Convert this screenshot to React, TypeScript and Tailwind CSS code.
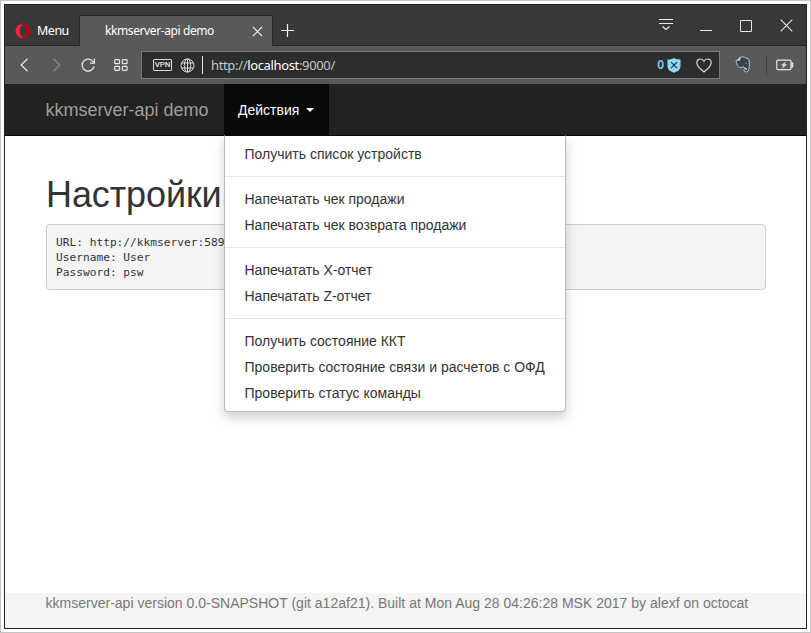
import React from "react";

const menuGroups: string[][] = [
  ["Получить список устройств"],
  ["Напечатать чек продажи", "Напечатать чек возврата продажи"],
  ["Напечатать X-отчет", "Напечатать Z-отчет"],
  ["Получить состояние ККТ", "Проверить состояние связи и расчетов с ОФД", "Проверить статус команды"],
];

function TabStrip() {
  return (
    <div className="flex h-[41px] shrink-0 items-end border-b border-[#232323] bg-[#383838] text-white">
      <div className="flex h-[28px] w-[74px] items-center pl-[10px]">
        <svg width="16" height="16" viewBox="0 0 16 16" className="shrink-0">
          <path fillRule="evenodd" d="M8 .5a7.5 7.5 0 1 0 0 15 7.5 7.5 0 0 0 0-15ZM8 2.2c2 0 3.100 2.400 3.100 5.800s-1.100 5.800-3.100 5.800S4.900 11.400 4.900 8 6 2.200 8 2.200Z" fill="#ff2030" />
          <path d="M8 .5a7.500 7.500 0 0 1 0 15c-1.300 0-2.400-.5-3.200-1.200 1.100.5 2.200.4 3.200-.5 2 0 3.100-2.400 3.100-5.800S10 2.200 8 2.200C7 1.400 5.900 1.200 4.800 1.700 5.700 1 6.800.5 8 .5Z" fill="#a80a1a" />
        </svg>
        <span className="ml-[6px] text-[12.5px] leading-4 tracking-[-0.5px]">Menu</span>
      </div>
      <div className="-mb-px flex h-[31px] w-[194px] items-center border-x border-t border-[#272727] bg-[#59595b] pl-[25px]">
        <span className="w-[147px] whitespace-nowrap text-[12px] leading-4 tracking-[-0.4px]">kkmserver-api demo</span>
        <svg width="11" height="11" viewBox="0 0 11 11" className="shrink-0" stroke="#eee" strokeWidth="1.1">
          <path d="M1 1l9 9M10 1l-9 9" />
        </svg>
      </div>
      <svg width="13" height="13" viewBox="0 0 13 13" className="mb-[8px] ml-[8px]" stroke="#eee" strokeWidth="1.200">
        <path d="M0 6.500h13M6.500 0v13" />
      </svg>
      <div className="mb-[12px] ml-auto flex items-center pr-[13px]">
        <svg width="16" height="15" viewBox="0 0 16 15" fill="none" stroke="#e8e8e8">
          <path d="M1 1.500h14M1 5.500h14" />
          <path d="M4.500 8.500L8 11.500l3.500-3" strokeWidth="1.300" />
        </svg>
        <svg width="12" height="15" viewBox="0 0 12 15" className="ml-[26px]" stroke="#e8e8e8">
          <path d="M0 12.500h12" />
        </svg>
        <svg width="12" height="12" viewBox="0 0 12 12" className="ml-[28px]" fill="none" stroke="#e8e8e8">
          <path d="M.5.5h11v11H.5z" />
        </svg>
        <svg width="13" height="13" viewBox="0 0 13 13" className="ml-[28px]" stroke="#e8e8e8" strokeWidth="1.100">
          <path d="M.7.7l11.600 11.600M12.300.7L.7 12.300" />
        </svg>
      </div>
    </div>
  );
}

function Toolbar() {
  return (
    <div className="flex h-[38px] shrink-0 items-center bg-[#59595b]">
      <svg width="9" height="14" viewBox="0 0 9 14" className="ml-[15px]" fill="none" stroke="#e4e4e4" strokeWidth="1.300">
        <path d="M7.500.8L1.200 7l6.300 6.200" />
      </svg>
      <svg width="9" height="14" viewBox="0 0 9 14" className="ml-[23px]" fill="none" stroke="#858587" strokeWidth="1.300">
        <path d="M1.500.8L7.800 7l-6.300 6.200" />
      </svg>
      <svg width="15" height="14" viewBox="0 0 15 14" className="ml-[20px]" fill="none" stroke="#e4e4e4" strokeWidth="1.300">
        <path d="M12.300 4A6 6 0 1 0 13 8.500M13.400.8v4.400H9" />
      </svg>
      <svg width="14" height="12" viewBox="0 0 14 12" className="ml-[17.500px]" fill="none" stroke="#e4e4e4" strokeWidth="1.200">
        <rect x=".7" y=".7" width="4.800" height="4" rx=".8" />
        <rect x="8.300" y=".7" width="4.800" height="4" rx=".8" />
        <rect x=".7" y="7.300" width="4.800" height="4" rx=".8" />
        <rect x="8.300" y="7.300" width="4.800" height="4" rx=".8" />
      </svg>
      <div className="ml-[13.500px] flex h-[28px] w-[579px] items-center border border-[#77797a] bg-[#2b2e2d] pl-[11px]">
        <span className="flex h-[12px] w-[19px] shrink-0 items-center justify-center rounded-[1px] border border-[#d5d5d5] font-['Roboto'] text-[8px] font-medium leading-none tracking-[-0.2px] text-[#e2e2e2]">VPN</span>
        <svg width="15" height="15" viewBox="0 0 15 15" className="ml-[8px] shrink-0" fill="none" stroke="#d5d8d8">
          <circle cx="7.500" cy="7.500" r="6.500" />
          <ellipse cx="7.500" cy="7.500" rx="3.200" ry="6.500" />
          <path d="M1.600 5h11.800M1.600 10h11.800M7.500 1v13" />
        </svg>
        <span className="ml-[7px] h-[18px] w-px bg-[#e8e8e8]" />
        <span className="ml-[8px] whitespace-nowrap text-[13px] leading-4 tracking-[-0.35px] text-[#c5c7c6]">
          http://<span className="text-white">localhost</span>:9000/
        </span>
        <span className="ml-auto text-[12px] font-semibold leading-4 text-[#7dcbff]">0</span>
        <svg width="14" height="15" viewBox="0 0 14 15" className="ml-[3px]">
          <path d="M.5 1.500Q4 1.500 7 .2q3 1.300 6.500 1.300v6.800q0 4.500-6.500 6.500Q.5 12.800.5 8.300Z" fill="#8ed7ff" />
          <path d="M4 4.200l6 6M10 4.200l-6 6" stroke="#263039" strokeWidth="1.200" />
        </svg>
        <svg width="16" height="15" viewBox="0 0 16 15" className="ml-[15px] mr-[7px]" fill="none" stroke="#d6d8d7" strokeWidth="1.200">
          <path d="M8 14C6.500 12.600.8 8.800.8 4.700.8 2.500 2.500 1 4.500 1 6 1 7.300 1.900 8 3.300 8.700 1.900 10 1 11.500 1c2 0 3.700 1.500 3.700 3.700C15.200 8.800 9.500 12.600 8 14Z" />
        </svg>
      </div>
      <svg width="16" height="17" viewBox="0 0 16 17" className="mb-[2px] ml-[15px]">
        <path d="M5.400 1h3.800l1.300 1 2.700.5q.7.300.8 1.300.6 4.300.2 8.200-.3 4-2.700 4-2.600 0-2.600-2.200 0-1.800 1.900-1.600-2 0-2.300-1.600-1.200 1.300-3.800.8Q1.700 10.200 1 5l.4-.8h3.500Z" fill="#34444a" stroke="#b9c0c2" />
        <path d="M1.200 4.500L5 .8v3.700ZM10.500 12.300H12v1.700h-1.500Z" fill="#b9c0c2" />
        <path d="M10.500 7.600q1-.8 1.500.3" fill="none" stroke="#9fa9ad" strokeWidth=".8" />
      </svg>
      <div className="ml-[15px] h-[19px] w-px bg-[#3f3f40]" />
      <svg width="18" height="12" viewBox="0 0 18 12" className="ml-[9px]" fill="none" stroke="#e2e2e2" strokeWidth="1.200">
        <rect x=".8" y="1.200" width="14.200" height="9.400" rx="1" />
        <path d="M15.400 3.800H17v4.400h-1.600Z" fill="#e2e2e2" strokeWidth=".6" />
        <path d="M10 2.300L4.800 6.500h2.500L6 9.700l5.200-4.400H8.700Z" fill="#e2e2e2" stroke="none" />
      </svg>
    </div>
  );
}

function ActionsMenu() {
  return (
    <div className="absolute left-0 top-[51px] z-10 w-[342px] rounded-b-[4px] border border-[#b9b9b9] border-t-[#080808] bg-white py-[5px] shadow-[0_6px_12px_rgba(0,0,0,0.18)]">
      {menuGroups.map((items, g) => (
        <React.Fragment key={g}>
          {g > 0 && <div className="my-[9px] h-px bg-[#e5e5e5]" />}
          {items.map((label) => (
            <div key={label} className="whitespace-nowrap px-[19.5px] py-[3px] text-[14px] leading-[20px] text-[#333]">{label}</div>
          ))}
        </React.Fragment>
      ))}
    </div>
  );
}

export default function App() {
  return (
    <div className="h-[633px] w-[811px] border border-[#c4c4c4] bg-white p-[3px] font-['Liberation_Sans',Arial,sans-serif]">
      <div className="flex h-[625px] w-[803px] flex-col border border-[#222]">
        <div className="shrink-0 font-['Noto_Sans',sans-serif]">
          <TabStrip />
          <Toolbar />
        </div>
        <nav className="flex h-[52px] shrink-0 border-b border-[#080808] bg-[#222] pl-[40.500px]">
          <div className="w-[178.500px] whitespace-nowrap pt-[16px] text-[18px] leading-[20px] text-[#9d9d9d]">kkmserver-api demo</div>
          <div className="relative">
            <div className="flex h-[52px] w-[105px] items-center bg-[#080808] pl-[14px] text-[14px] leading-[20px] text-white">
              <span className="w-[68px]">Действия</span>
              <span className="border-x-4 border-t-4 border-x-transparent border-t-white" />
            </div>
            <ActionsMenu />
          </div>
        </nav>
        <main className="flex-1 bg-white px-[41px] pt-[39px]">
          <h1 className="h-[49px] text-[36px] leading-[40px] tracking-[-0.1px] text-[#333]">Настройки</h1>
          <pre className="h-[66px] w-[720px] rounded-[4px] border border-[#ccc] bg-[#f4f4f4] px-[9px] py-[10px] font-['DejaVu_Sans_Mono',monospace] text-[11.2px] leading-[15px] text-[#333]">{"URL: http://kkmserver:5893\nUsername: User\nPassword: psw"}</pre>
        </main>
        <footer className="h-[35px] shrink-0 whitespace-nowrap bg-[#f4f4f4] pl-[40.500px] text-[14px] leading-[20px] tracking-[0.01px] text-[#777]">
          kkmserver-api version 0.0-SNAPSHOT (git a12af21). Built at Mon Aug 28 04:26:28 MSK 2017 by alexf on octocat
        </footer>
      </div>
    </div>
  );
}
